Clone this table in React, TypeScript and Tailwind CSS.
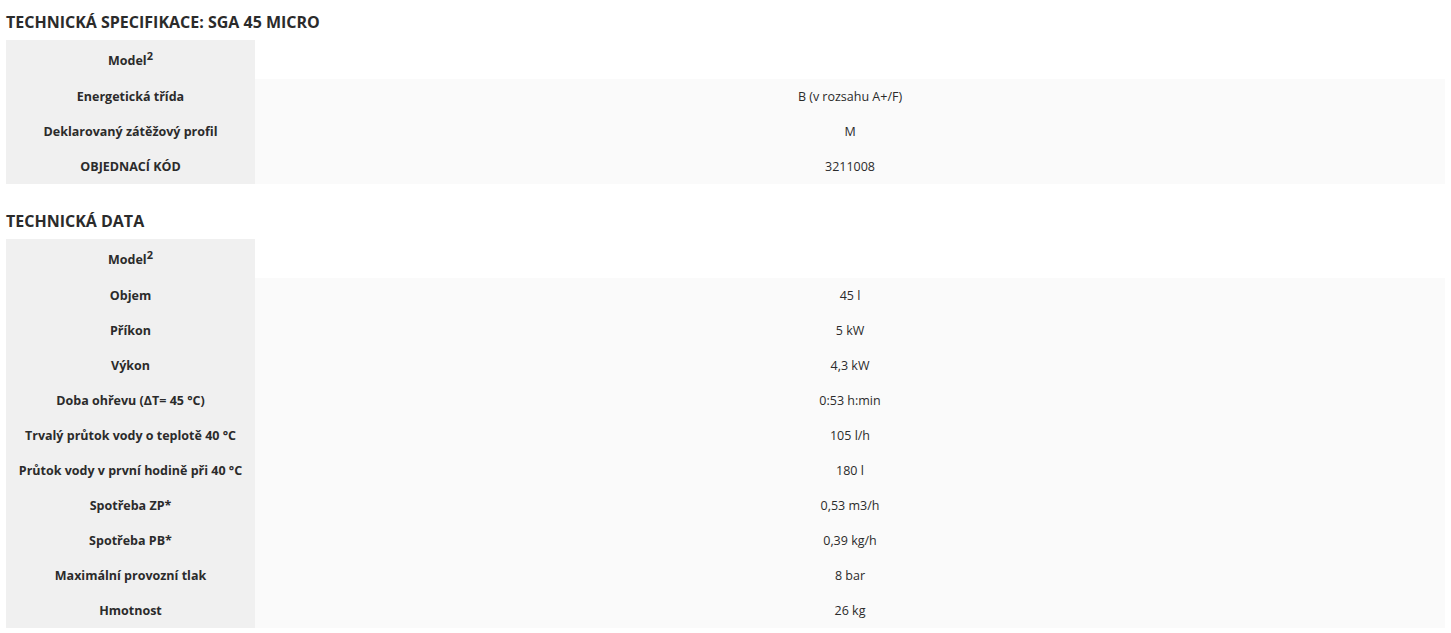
// Technical specification tables

type Row = { label: string; value: string }

const specRows: Row[] = [
  { label: 'Energetická třída', value: 'B (v rozsahu A+/F)' },
  { label: 'Deklarovaný zátěžový profil', value: 'M' },
  { label: 'OBJEDNACÍ KÓD', value: '3211008' },
]

const dataRows: Row[] = [
  { label: 'Objem', value: '45 l' },
  { label: 'Příkon', value: '5 kW' },
  { label: 'Výkon', value: '4,3 kW' },
  { label: 'Doba ohřevu (ΔT= 45 °C)', value: '0:53 h:min' },
  { label: 'Trvalý průtok vody o teplotě 40 °C', value: '105 l/h' },
  { label: 'Průtok vody v první hodině při 40 °C', value: '180 l' },
  { label: 'Spotřeba ZP*', value: '0,53 m3/h' },
  { label: 'Spotřeba PB*', value: '0,39 kg/h' },
  { label: 'Maximální provozní tlak', value: '8 bar' },
  { label: 'Hmotnost', value: '26 kg' },
]

function SpecTable({ rows }: { rows: Row[] }) {
  return (
    <table className="w-full border-collapse text-[12.5px] text-[#2b2b2b]">
      <tbody>
        <tr className="h-[39px]">
          <th className="w-[249px] bg-[#f0f0f0] pt-[4px] text-center font-bold">
            Model<sup className="text-[11px]">2</sup>
          </th>
          <td className="bg-white"></td>
        </tr>
        {rows.map((r) => (
          <tr key={r.label} className="h-[35px]">
            <th className="bg-[#f0f0f0] pt-[2px] text-center font-bold">{r.label}</th>
            <td className="bg-[#fafafa] pt-[2px] text-center">{r.value}</td>
          </tr>
        ))}
      </tbody>
    </table>
  )
}

export default function App() {
  return (
    <div className="bg-white px-[6px] font-['Open_Sans',sans-serif]">
      <h2 className="flex h-10 items-center pt-[4px] text-[16px] font-bold text-[#2b2b2b]">
        TECHNICKÁ SPECIFIKACE: SGA 45 MICRO
      </h2>
      <SpecTable rows={specRows} />

      <h2 className="mt-[15px] flex h-10 items-center pt-[4px] text-[16px] font-bold text-[#2b2b2b]">
        TECHNICKÁ DATA
      </h2>
      <SpecTable rows={dataRows} />
    </div>
  )
}
